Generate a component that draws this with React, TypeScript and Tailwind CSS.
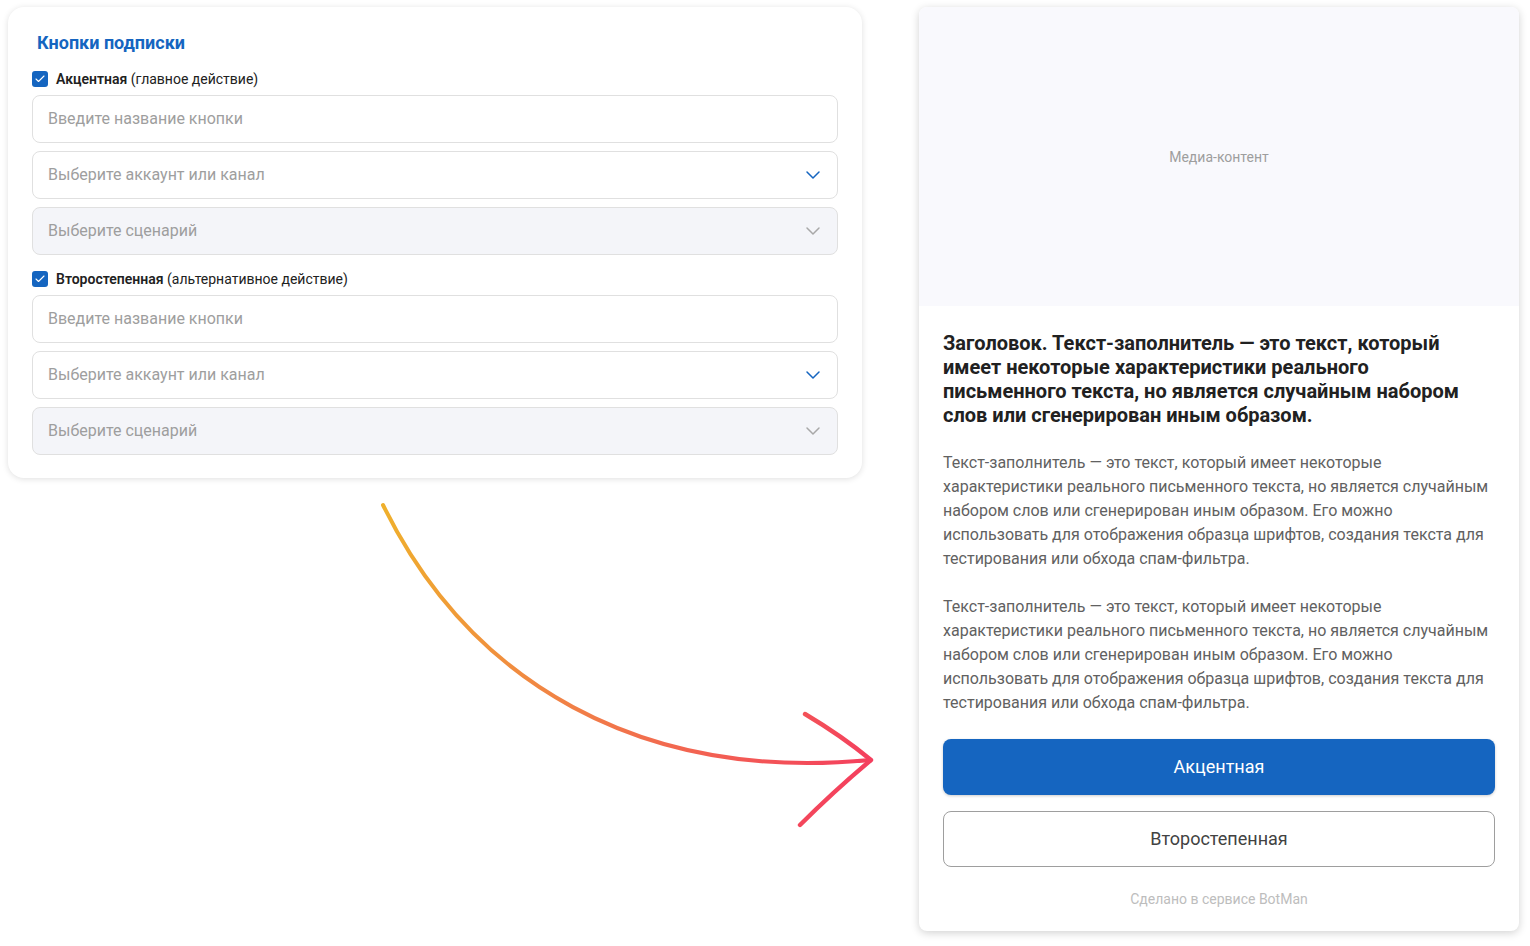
import { Check, ChevronDown } from "lucide-react";

const font = { fontFamily: "Roboto, 'Noto Sans', sans-serif" };

function Checkbox() {
  return (
    <span className="flex h-4 w-4 shrink-0 items-center justify-center rounded-[3px] bg-[#1565c0]">
      <Check className="h-3 w-3 text-white" strokeWidth={2.2} />
    </span>
  );
}

function TextInput({ placeholder }: { placeholder: string }) {
  return (
    <div className="flex h-12 items-center rounded-lg border border-[#e0e0e0] bg-white pl-[15px] pr-4 text-base text-[#9e9e9e]">
      {placeholder}
    </div>
  );
}

function Select({ placeholder, disabled }: { placeholder: string; disabled?: boolean }) {
  return (
    <div
      className={`flex h-12 items-center justify-between rounded-lg border border-[#e0e0e0] pl-[15px] pr-3 text-base text-[#9e9e9e] ${
        disabled ? "bg-[#f4f5f9]" : "bg-white"
      }`}
    >
      <span>{placeholder}</span>
      <ChevronDown
        className={`h-6 w-6 ${disabled ? "text-[#a8a8a8]" : "text-[#1565c0]"}`}
        strokeWidth={1.5}
      />
    </div>
  );
}

function ButtonGroup({ name, hint }: { name: string; hint: string }) {
  return (
    <div className="mt-4 flex flex-col">
      <label className="flex items-center gap-2 text-sm leading-4 text-[#212121]">
        <Checkbox />
        <span>
          <b className="font-semibold">{name}</b> ({hint})
        </span>
      </label>
      <div className="mt-2 flex flex-col gap-2">
        <TextInput placeholder="Введите название кнопки" />
        <Select placeholder="Выберите аккаунт или канал" />
        <Select placeholder="Выберите сценарий" disabled />
      </div>
    </div>
  );
}

function Arrow() {
  // page coords shifted by (8, 478)
  return (
    <svg width="880" height="360" viewBox="8 478 880 360" className="overflow-visible">
      <defs>
        <linearGradient id="arrowGrad" gradientUnits="userSpaceOnUse" x1="383" y1="505" x2="872" y2="760">
          <stop offset="0" stopColor="#efb02c" />
          <stop offset="0.5" stopColor="#f17d48" />
          <stop offset="1" stopColor="#f43f5e" />
        </linearGradient>
      </defs>
      <path
        d="M383,505 C470,682 640,782 870,760"
        fill="none"
        stroke="url(#arrowGrad)"
        strokeWidth="4"
        strokeLinecap="round"
      />
      <path
        d="M805,714 Q842,736 871,760 Q834,791 800,825"
        fill="none"
        stroke="url(#arrowGrad)"
        strokeWidth="4.4"
        strokeLinecap="round"
        strokeLinejoin="round"
      />
    </svg>
  );
}

const body =
  "Текст-заполнитель — это текст, который имеет некоторые характеристики реального письменного текста, но является случайным набором слов или сгенерирован иным образом. Его можно использовать для отображения образца шрифтов, создания текста для тестирования или обхода спам-фильтра.";

export default function App() {
  return (
    <div className="flex min-h-screen gap-[57px] bg-white pl-2 pt-[7px]" style={font}>
      {/* SETTINGS */}
      <div className="flex w-[854px] flex-col">
        <div className="flex flex-col rounded-2xl bg-white px-6 pb-[23px] pt-6 shadow-[0_1px_6px_rgba(0,0,0,0.13)]">
          <h2 className="pl-[5px] text-lg font-bold leading-6 text-[#1565c0]">Кнопки подписки</h2>
          <ButtonGroup name="Акцентная" hint="главное действие" />
          <ButtonGroup name="Второстепенная" hint="альтернативное действие" />
        </div>
        <Arrow />
      </div>

      {/* PREVIEW */}
      <div className="flex h-[924px] w-[600px] flex-col overflow-hidden rounded-lg bg-white shadow-[0_2px_8px_rgba(0,0,0,0.18)]">
        <div className="flex h-[299px] items-center justify-center bg-[#f9f9fd] text-sm text-[#9e9e9e]">
          Медиа-контент
        </div>
        <div className="flex flex-col px-6 pb-6 pt-[25px]">
          <h1 className="text-xl font-bold leading-6 text-[#212121]">
            Заголовок. Текст-заполнитель — это текст, который имеет некоторые характеристики реального
            письменного текста, но является случайным набором слов или сгенерирован иным образом.
          </h1>
          <p className="mt-6 text-base leading-6 text-[#616161]">{body}</p>
          <p className="mt-6 text-base leading-6 text-[#616161]">{body}</p>
          <button className="mt-6 h-14 rounded-lg bg-[#1565c0] text-lg text-white shadow-[0_1px_3px_rgba(0,0,0,0.2)]">
            Акцентная
          </button>
          <button className="mt-4 h-14 rounded-lg border border-[#9e9e9e] bg-white text-lg text-[#424242]">
            Второстепенная
          </button>
          <div className="mt-6 text-center text-sm leading-4 text-[#bdbdbd]">Сделано в сервисе BotMan</div>
        </div>
      </div>
    </div>
  );
}
